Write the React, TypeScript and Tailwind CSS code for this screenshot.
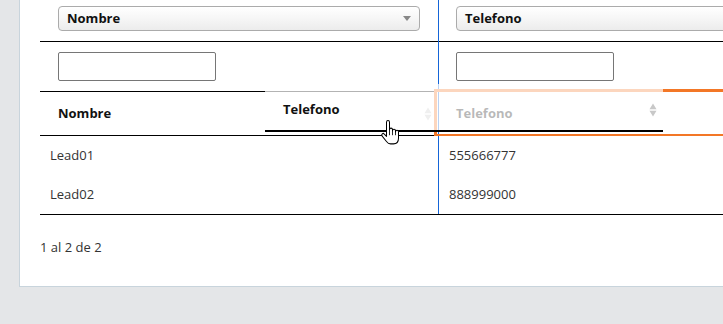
const ROWS = [
  { nombre: "Lead01", telefono: "555666777" },
  { nombre: "Lead02", telefono: "888999000" },
] as const;

function SortArrows({ className = "" }: { className?: string }) {
  return (
    <svg width="8" height="14" viewBox="0 0 8 14" className={className}>
      <path d="M4 0.5 L7.5 6.2 H0.5Z M0.5 7.8 H7.5 L4 13.5Z" fill="#c8c8c8" />
    </svg>
  );
}

function Select({ label }: { label: string }) {
  return (
    <div className="flex h-[25px] w-[362px] items-center justify-between rounded-[4px] border border-[#ababab] bg-gradient-to-b from-white via-[#f6f6f6] to-[#ececec] pl-2 pr-[8px]">
      <span className="text-[13px] font-bold text-[#111]">{label}</span>
      <svg width="8" height="5" viewBox="0 0 8 5">
        <path d="M0 0 H8 L4 5Z" fill="#888" />
      </svg>
    </div>
  );
}

function HandCursor() {
  return (
    <svg width="19" height="25" viewBox="0 0 19 23" preserveAspectRatio="none">
      <path
        d="M5.5 2 a1.5 1.5 0 0 1 3 0 V9 a1.5 1.5 0 0 1 3 0 V10 a1.5 1.5 0 0 1 3 0 V11 a1.5 1.5 0 0 1 3 0 V16.5 c0 3.5 -2 5.5 -5 5.5 H9.5 c-2 0 -3 -1 -4 -2.2 L1.2 14.8 a1.4 1.4 0 0 1 2.1 -1.9 L5.5 15 Z"
        fill="white"
        stroke="black"
        strokeWidth="1"
        strokeLinejoin="round"
      />
      <path d="M8.5 9 V14 M11.5 10 V14 M14.5 11 V14" stroke="black" strokeWidth="0.8" />
    </svg>
  );
}

export default function App() {
  return (
    <div className="h-[324px] w-[723px] overflow-hidden bg-[#e4e6e8] font-['Open_Sans',sans-serif]">
      <div className="ml-[19px] h-[287px] w-[820px] border-b border-l border-[#c8d4dc] bg-white pl-5">
        <div className="relative w-[800px]">
          {/* filtros: selects */}
          <div className="grid h-[42px] grid-cols-[398px_1fr] border-b border-black">
            <div className="pl-[18px] pt-[6px]">
              <Select label="Nombre" />
            </div>
            <div className="pl-[18px] pt-[6px]">
              <Select label="Telefono" />
            </div>
          </div>

          {/* filtros: inputs */}
          <div className="grid h-[49px] grid-cols-[398px_1fr]">
            <div className="pl-[18px] pt-[10px]">
              <div className="h-[29px] w-[158px] rounded-[2px] border border-[#767676] bg-white" />
            </div>
            <div className="pl-[18px] pt-[10px]">
              <div className="h-[29px] w-[158px] rounded-[2px] border border-[#767676] bg-white" />
            </div>
          </div>

          {/* cabecera */}
          <div className="grid h-[45px] grid-cols-[398px_1fr] border-y border-black text-[13px] font-bold text-[#111]">
            <div className="flex items-center justify-between pl-[18px] pr-[6px]">
              <span>Nombre</span>
              <SortArrows />
            </div>
            <div className="flex items-center pl-[18px]">
              <span>Telefono</span>
            </div>
          </div>

          {/* filas */}
          {ROWS.map((r, i) => (
            <div
              key={r.nombre}
              className={[
                "grid h-[39px] grid-cols-[398px_1fr] text-[13px] text-[#333]",
                i === ROWS.length - 1 ? "h-[40px] border-b border-black" : "",
              ].join(" ")}
            >
              <div className="flex items-center pl-[10px]">{r.nombre}</div>
              <div className="flex items-center pl-[11px]">{r.telefono}</div>
            </div>
          ))}

          {/* info */}
          <div className="pt-[23px] text-[13px] leading-[18px] text-[#333]">1 al 2 de 2</div>

          {/* columna activa */}
          <div className="absolute left-[398px] top-0 h-[214px] w-px bg-[#1565d8]" />

          {/* indicador de destino */}
          <div className="absolute left-[394px] top-[89px] h-[47px] w-[450px] border-b-2 border-l-[3px] border-t-[3px] border-[#f37726]" />

          {/* cabecera arrastrada */}
          <div className="absolute left-[225px] top-[84px] flex h-[48px] w-[398px] items-center justify-between border-b-2 border-black bg-white/70 pl-[18px] pr-[6px] pt-[6px] text-[13px] font-bold text-[#111]">
            <span>Telefono</span>
            <SortArrows />
          </div>

          {/* cursor */}
          <div className="absolute left-[341px] top-[120px]">
            <HandCursor />
          </div>
        </div>
      </div>
    </div>
  );
}
